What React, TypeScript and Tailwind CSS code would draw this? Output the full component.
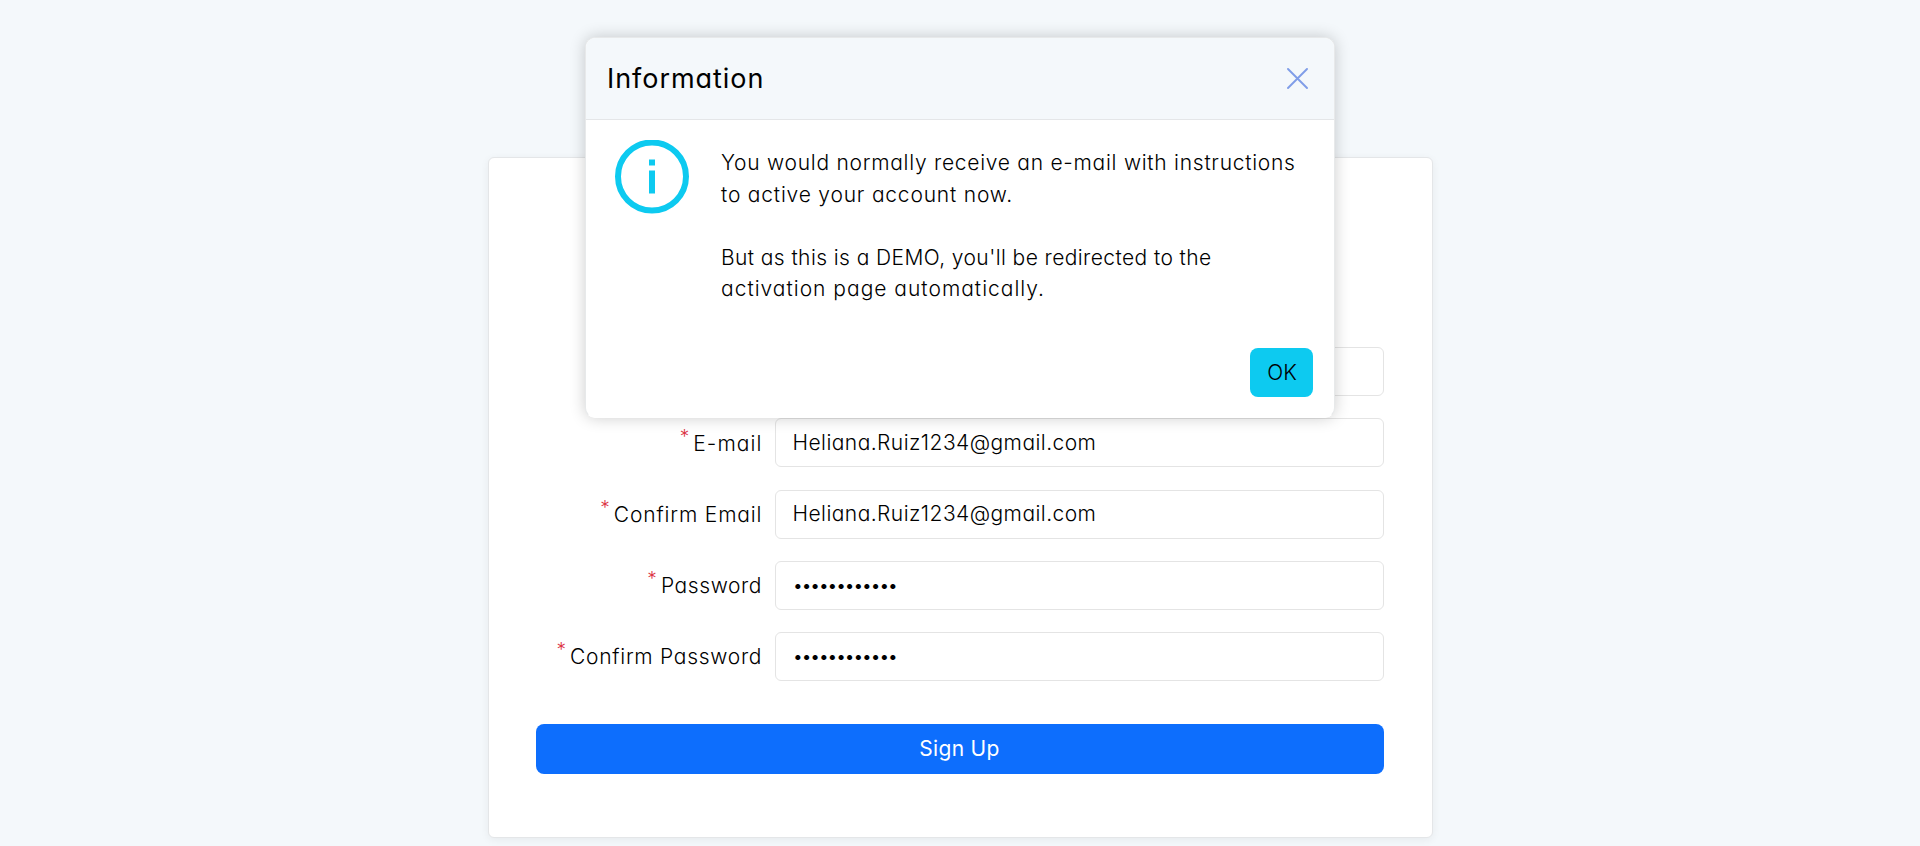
import type { ReactNode } from "react";

type FieldProps = {
  label: string;
  labelClass: string;
  value: string;
  valueClass: string;
};

const fields: FieldProps[] = [
  { label: "", labelClass: "", value: "", valueClass: "" },
  {
    label: "E-mail",
    labelClass: "tracking-[1.1px] -mr-[1.1px]",
    value: "Heliana.Ruiz1234@gmail.com",
    valueClass: "tracking-[0.44px]",
  },
  {
    label: "Confirm Email",
    labelClass: "tracking-[0.85px] -mr-[0.85px]",
    value: "Heliana.Ruiz1234@gmail.com",
    valueClass: "tracking-[0.44px]",
  },
  {
    label: "Password",
    labelClass: "tracking-[0.6px] -mr-[0.6px]",
    value: "••••••••••••",
    valueClass: "text-[19px] tracking-[-2.05px]",
  },
  {
    label: "Confirm Password",
    labelClass: "tracking-[0.72px] -mr-[0.72px]",
    value: "••••••••••••",
    valueClass: "text-[19px] tracking-[-2.05px]",
  },
];

function Field({ label, labelClass, value, valueClass }: FieldProps) {
  return (
    <div className="flex h-[49px] items-center">
      <label className="flex w-[226px] justify-end gap-[4px] pt-px">
        {label && (
          <>
            <span className="-mt-[7px] text-[19px] leading-[31px] text-[#dc3545]">*</span>
            <span className={labelClass}>{label}</span>
          </>
        )}
      </label>
      <div className="ml-[13px] flex h-full flex-1 items-center rounded-[6px] border border-[#e4e4e4] bg-white px-[17px]">
        <span className={valueClass}>{value}</span>
      </div>
    </div>
  );
}

function InfoIcon() {
  return (
    <svg className="mt-[20px] h-[74px] w-[74px] shrink-0" viewBox="0 0 74 74" fill="none">
      <circle cx="37" cy="36.5" r="34" stroke="#0dcaf0" strokeWidth="6" />
      <path d="M34 19.5h6v6h-6zM34 30.5h6v23h-6z" fill="#0dcaf0" />
    </svg>
  );
}

function Dialog({ title, children }: { title: string; children: ReactNode }) {
  return (
    <div className="absolute top-[37px] left-[585px] flex h-[381px] w-[750px] flex-col overflow-hidden rounded-[10px] border border-[#e7e9ea] border-b-white bg-white shadow-[0_0_16px_rgba(0,0,0,0.2)]">
      <div className="flex h-[82px] items-center justify-between border-b border-[#e4e6e8] bg-[#f4f8fb] pr-[26px] pl-[20px]">
        <h5 className="pl-px text-[27px] font-normal tracking-[0.95px]">{title}</h5>
        <svg className="-mt-px h-[21px] w-[21px]" viewBox="0 0 21 21" fill="none">
          <path d="M1 1l19 19M20 1L1 20" stroke="#7f9de8" strokeWidth="1.9" strokeLinecap="round" />
        </svg>
      </div>
      {children}
    </div>
  );
}

export default function App() {
  return (
    <div className="relative h-[846px] w-full overflow-hidden bg-[#f4f8fb] pt-[157px] font-['Inter',sans-serif] text-[21px] leading-[31.5px] font-light text-black [font-feature-settings:'cv11']">
      <div className="mx-auto flex h-[681px] w-[945px] flex-col rounded-[6px] border border-[#e4e6e8] bg-white pt-[189px] pr-[48px] pl-[47px] shadow-[0_2px_8px_rgba(0,0,0,0.06)]">
        <div className="flex flex-col gap-[22.25px]">
          {fields.map((f, i) => (
            <Field key={i} {...f} />
          ))}
        </div>
        <button className="mt-[43px] h-[50px] w-full rounded-[8px] bg-[#0d6efd] font-normal tracking-[0.3px] text-white">
          Sign Up
        </button>
      </div>

      <Dialog title="Information">
        <div className="flex gap-[32px] pl-[29px]">
          <InfoIcon />
          <div className="pt-[27px] whitespace-nowrap">
            <p className="tracking-[0.73px]">You would normally receive an e-mail with instructions</p>
            <p className="tracking-[0.8px]">to active your account now.</p>
            <br />
            <p className="tracking-[0.41px]">But as this is a DEMO, you'll be redirected to the</p>
            <p className="tracking-[1px]">activation page automatically.</p>
          </div>
        </div>
        <div className="mt-auto flex justify-end pr-[21px] pb-[20px]">
          <button className="h-[49px] w-[63px] rounded-[8px] bg-[#0dcaf0] pl-px">OK</button>
        </div>
      </Dialog>
    </div>
  );
}
